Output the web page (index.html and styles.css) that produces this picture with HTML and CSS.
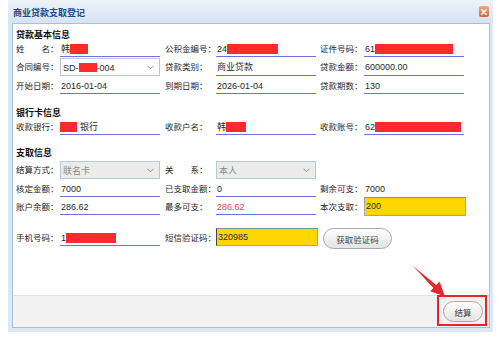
FILE: index.html
```html
<!DOCTYPE html>
<html lang="zh-CN">
<head>
<meta charset="utf-8">
<title>商业贷款支取登记</title>
<link rel="stylesheet" href="styles.css">
</head>
<body>
<div class="window">
  <div class="titlebar">
    <span class="title">商业贷款支取登记</span>
    <span class="close"><svg width="6" height="6" viewBox="0 0 6 6"><path d="M0.8 0.8 L5.2 5.2 M5.2 0.8 L0.8 5.2" stroke="#fff" stroke-width="1.5" stroke-linecap="round"/></svg></span>
  </div>
  <div class="panel">
    <div class="body">
      <div class="sec-title">贷款基本信息</div>
      <div class="grid s1">
        <div class="lab">姓　　名：</div>
        <div class="val line">韩<i class="red w18"></i></div>
        <div class="lab l2">公积金编号：</div>
        <div class="val line">24<i class="red w51"></i></div>
        <div class="lab l3">证件号码：</div>
        <div class="val line">61<i class="red w78"></i></div>

        <div class="lab">合同编号：</div>
        <div class="select"><span>SD-<i class="red w18 rs"></i>-004</span><svg class="chev" width="7" height="5" viewBox="0 0 7 5"><polyline points="0.5,0.8 3.5,3.8 6.5,0.8" fill="none" stroke="#8a99b0" stroke-width="1"/></svg></div>
        <div class="lab l2">贷款类别：</div>
        <div class="val line">商业贷款</div>
        <div class="lab l3">贷款金额：</div>
        <div class="val line">600000.00</div>

        <div class="lab">开始日期：</div>
        <div class="val line">2016-01-04</div>
        <div class="lab l2">到期日期：</div>
        <div class="val line">2026-01-04</div>
        <div class="lab l3">贷款期数：</div>
        <div class="val line">130</div>
      </div>

      <div class="sec-title t2">银行卡信息</div>
      <div class="grid s2">
        <div class="lab">收款银行：</div>
        <div class="val line"><i class="red w17 first"></i>银行</div>
        <div class="lab l2">收款户名：</div>
        <div class="val line">韩<i class="red w20"></i></div>
        <div class="lab l3">收款账号：</div>
        <div class="val line">62<i class="red w86"></i></div>
      </div>

      <div class="sec-title t3">支取信息</div>
      <div class="grid s3">
        <div class="lab">结算方式：</div>
        <div class="select disabled"><span>联名卡</span><svg class="chev" width="7" height="5" viewBox="0 0 7 5"><polyline points="0.5,0.8 3.5,3.8 6.5,0.8" fill="none" stroke="#8a99b0" stroke-width="1"/></svg></div>
        <div class="lab l2">关　　系：</div>
        <div class="select disabled"><span>本人</span><svg class="chev" width="7" height="5" viewBox="0 0 7 5"><polyline points="0.5,0.8 3.5,3.8 6.5,0.8" fill="none" stroke="#8a99b0" stroke-width="1"/></svg></div>
        <div class="lab l3"></div>
        <div class="val"></div>

        <div class="lab">核定金额：</div>
        <div class="val line">7000</div>
        <div class="lab l2">已支取金额：</div>
        <div class="val line">0</div>
        <div class="lab l3">剩余可支：</div>
        <div class="val">7000</div>

        <div class="lab">账户余额：</div>
        <div class="val line">286.62</div>
        <div class="lab l2">最多可支：</div>
        <div class="val line warn">286.62</div>
        <div class="lab l3">本次支取：</div>
        <div class="input yellow">200</div>
      </div>

      <div class="grid s4">
        <div class="lab">手机号码：</div>
        <div class="val line">1<i class="red w50"></i></div>
        <div class="lab l2">短信验证码：</div>
        <div class="input yellow sms">320985</div>
        <div class="btn-cell"><button class="btn code">获取验证码</button></div>
      </div>
    </div>
    <div class="footer">
      <button class="btn settle">结算</button>
    </div>
  </div>
  <div class="highlight"></div>
  <svg class="arrow" width="485" height="332" viewBox="8 0 485 332"><polygon points="413,266 436.2,285 439.5,281.6 445,296.5 430.2,291.2 433.4,288" fill="#e8262b"/></svg>
</div>
</body>
</html>
```

FILE: styles.css
```css
* { box-sizing: border-box; }
html, body { margin: 0; padding: 0; background: #ffffff; }
body {
  font-family: "Liberation Sans", "Noto Sans CJK SC", sans-serif;
  font-size: 8.5px;
  color: #222;
}
i { font-style: normal; }

.window {
  position: relative;
  margin-left: 8px;
  width: 485px;
  height: 332px;
  background: #dde8f5;
  padding: 0 3px 4px 4px;
  display: flex;
  flex-direction: column;
}

.titlebar {
  height: 23px;
  margin: 0 -3px 0 -4px;
  padding: 2px 4px 0 5px;
  display: flex;
  align-items: center;
  justify-content: space-between;
  background: linear-gradient(#eef3fa, #d6e3f2);
}
.title {
  font-family: "Noto Sans CJK SC", sans-serif;
  font-weight: bold;
  font-size: 9px;
  color: #1d4c8a;
}
.close {
  width: 10px;
  height: 11px;
  border-radius: 2px;
  background: linear-gradient(#eba984, #cc6d44);
  display: flex;
  align-items: center;
  justify-content: center;
  margin-bottom: 2px;
}

.panel {
  flex: 1;
  background: #ffffff;
  border: 1px solid #a9bfda;
  display: flex;
  flex-direction: column;
}
.body {
  flex: 1;
  padding: 6px 0 0 3px;
}
.sec-title {
  height: 10px;
  line-height: 10px;
  font-family: "Noto Sans CJK SC", sans-serif;
  font-weight: bold;
  font-size: 9px;
  color: #111;
}
.sec-title.t2 { margin-top: 14px; }
.sec-title.t3 { margin-top: 13px; margin-bottom: 3px; }

.grid {
  display: grid;
  grid-template-columns: 44px 100px 56px 100px 48px 100px;
  row-gap: 1px;
}
.s1 { grid-template-rows: 17px 18px 17px; }
.s2 { grid-template-rows: 17px; }
.s3 { grid-template-rows: 18px 17px 17px; }
.s4 { grid-template-rows: 17px; margin-top: 14px; }

.lab, .val {
  padding-top: 2px;
  line-height: 15px;
  white-space: nowrap;
}
.lab { color: #262626; }
.lab.l2 { padding-left: 5px; }
.lab.l3 { padding-left: 4px; }
.val { padding-left: 1px; color: #2a2a2a; font-size: 9px; }
.val.line { border-bottom: 1px solid #6e73d2; }
.val.warn { color: #e8454b; }

.red {
  display: inline-block;
  height: 10px;
  vertical-align: -2px;
  background: #ff2b2b;
}
.red.first { margin-left: -1px; margin-right: 3px; }
.w17 { width: 17px; }
.w18 { width: 18px; }
.w20 { width: 20px; }
.w50 { width: 50px; }
.w51 { width: 51px; }
.w78 { width: 78px; }
.w86 { width: 86px; }
.red.rs { height: 9px; vertical-align: -1px; }

.select {
  height: 18px;
  border: 1px solid #bcc7d6;
  background: #ffffff;
  display: flex;
  align-items: center;
  justify-content: space-between;
  padding: 1px 5px 0 2px;
  color: #2a2a2a;
  font-size: 9px;
  white-space: nowrap;
}
.select.disabled {
  background: #ebebe8;
  color: #8c8c8c;
}
.chev { display: block; }

.input {
  border: 1px solid #94a6c0;
  border-top-color: #7d90ad;
  padding: 1px 0 0 1px;
  line-height: 15px;
  color: #2a2a2a;
  font-size: 9px;
}
.yellow {
  background: #ffd700;
  margin: -1px -2px -1px 0;
}
.sms {
  margin: -1px -2px 0 0;
  border-left-color: #444;
}

.btn-cell {
  grid-column: span 2;
  padding-left: 7px;
}
.btn {
  font-family: "Noto Sans CJK SC", sans-serif;
  font-size: 8.5px;
  color: #444;
  border: 1px solid #a9a9a9;
  border-radius: 11px;
  background: linear-gradient(#ffffff, #e3e3e3);
  padding: 0;
  margin: 0;
}
.btn.code {
  width: 69px;
  height: 21px;
  margin-top: -1px;
}

.footer {
  height: 32px;
  background: #f2f2f2;
  border-top: 1px solid #e2e2e2;
  display: flex;
  justify-content: flex-end;
  align-items: flex-start;
  padding: 5px 6px 0 0;
}
.btn.settle {
  width: 40px;
  height: 21px;
}

.highlight {
  position: absolute;
  left: 429px;
  top: 295px;
  width: 50px;
  height: 31px;
  border: 2px solid #e3262c;
}
.arrow {
  position: absolute;
  left: 0;
  top: 0;
  pointer-events: none;
}
```
